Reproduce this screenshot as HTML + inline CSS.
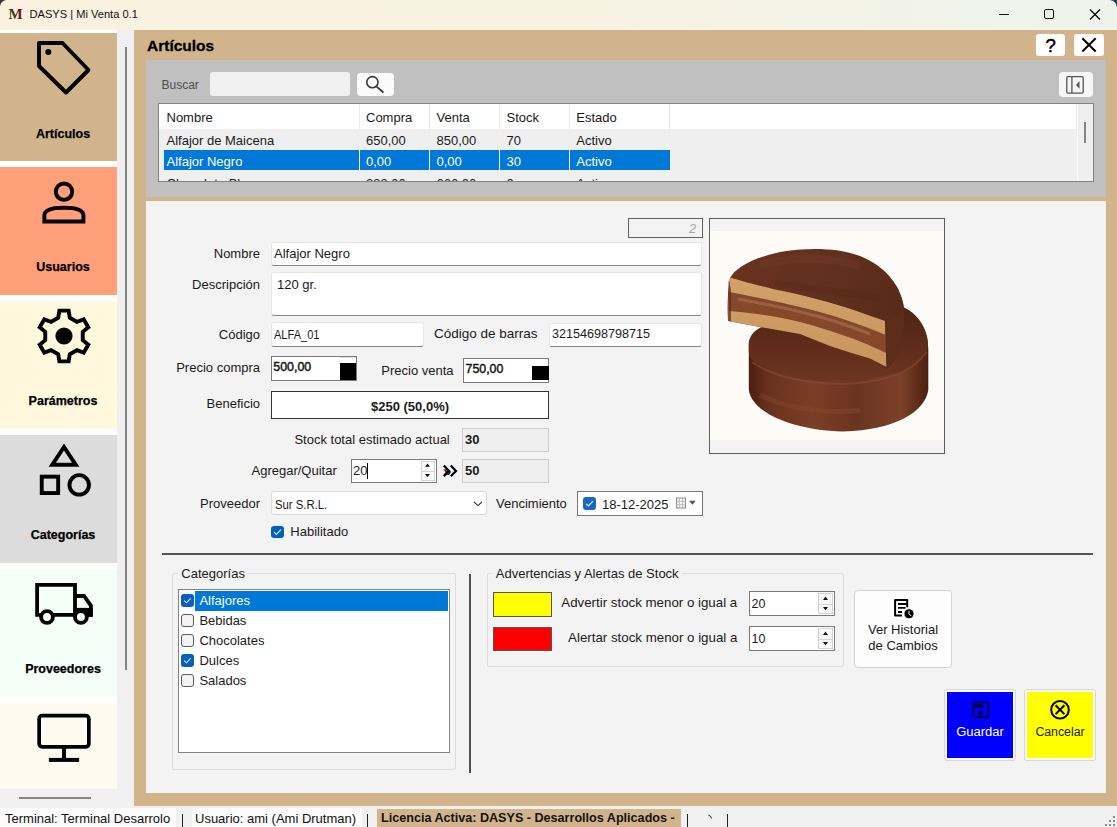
<!DOCTYPE html>
<html><head><meta charset="utf-8">
<style>
*{box-sizing:border-box;margin:0;padding:0}
html,body{width:1117px;height:827px;overflow:hidden;background:#f0f0f0}
body{font-family:"Liberation Sans",sans-serif;font-size:13px;color:#1a1a1a;position:relative}
.a{position:absolute}
.t{position:absolute;font-size:13px;line-height:13px;white-space:nowrap}
.r{text-align:right}
.b{font-weight:bold}
svg{position:absolute;overflow:visible}
.tb{background:#fff;border:1px solid #e6e6e6;border-bottom:1px solid #868686;border-radius:3px}
</style></head><body>
<!-- TITLE BAR -->
<div class="a" style="left:0;top:0;width:1117px;height:30px;background:linear-gradient(90deg,#faf2df 0%,#f8f2e2 50%,#eef4ec 100%)"></div>
<!-- SIDEBAR -->
<div class="a" style="left:0;top:30px;width:117px;height:759px;background:#ffffff"></div>
<div class="a" style="left:117px;top:30px;width:17px;height:776px;background:#f0f0f0"></div>
<div class="a" style="left:0;top:789px;width:134px;height:17px;background:#f0f0f0"></div>
<div class="a" style="left:125px;top:47px;width:2px;height:623px;background:#858585"></div>
<div class="a" style="left:19px;top:797px;width:72px;height:2px;background:#858585"></div>
<div class="a" style="left:0;top:33px;width:117px;height:128px;background:#d2b48c"></div>
<div class="a" style="left:0;top:167px;width:117px;height:128px;background:#ffa07a"></div>
<div class="a" style="left:0;top:301px;width:117px;height:128px;background:#fff8dc"></div>
<div class="a" style="left:0;top:435px;width:117px;height:128px;background:#dcdcdc"></div>
<div class="a" style="left:0;top:569px;width:117px;height:128px;background:#f5fffa"></div>
<div class="a" style="left:0;top:703px;width:117px;height:86px;background:#fffaf0"></div>
<svg width="1117" height="827" style="left:0;top:0" fill="none" stroke="#000" stroke-width="3.9">
<path d="M39,43 H62.5 L88.5,70 L66,92.5 L39,66 Z" stroke-linejoin="round"/>
<circle cx="48.3" cy="52.1" r="3" fill="#000" stroke="none"/>
<circle cx="64" cy="191.7" r="8.2"/>
<path d="M44.35,221.45 V215.5 C44.35,210 52,207.75 64,207.75 C76,207.75 83.45,210 83.45,215.5 V221.45 Z" stroke-linejoin="miter"/>
<path d="M58.20,317.70 L59.40,310.60 L68.60,310.60 L69.80,317.70 L76.95,321.83 L83.70,319.32 L88.30,327.28 L82.75,331.87 L82.75,340.13 L88.30,344.72 L83.70,352.68 L76.95,350.17 L69.80,354.30 L68.60,361.40 L59.40,361.40 L58.20,354.30 L51.05,350.17 L44.30,352.68 L39.70,344.72 L45.25,340.13 L45.25,331.87 L39.70,327.28 L44.30,319.32 L51.05,321.83 Z" stroke-linejoin="miter"/>
<circle cx="64" cy="336" r="8.6" fill="#000" stroke="none"/>
<path d="M64,447 L52.2,464.8 H75.8 Z" stroke-linejoin="miter"/>
<rect x="41.75" y="476.65" width="16.4" height="16.4"/>
<circle cx="79.2" cy="484.9" r="9.75"/>
<path d="M37.1,614.9 V584.9 H75 V614.9 Z" stroke-width="3.8"/>
<path d="M75,596 H84 L90.9,605.6 V614.9 H75" stroke-width="3.8"/>
<rect x="75" y="607.9" width="17.8" height="8.9" fill="#000" stroke="none"/>
<circle cx="47" cy="617" r="5.9" fill="#f5fffa"/>
<circle cx="80.9" cy="617" r="5.9" fill="#f5fffa"/>
<rect x="39.15" y="715.65" width="49.7" height="31.2" rx="3" stroke-width="3.7"/>
<rect x="62" y="747" width="4" height="11" fill="#000" stroke="none"/>
<rect x="48.9" y="757.9" width="30.2" height="4" fill="#000" stroke="none"/>
</svg>
<div class="t b" style="left:13px;width:100px;text-align:center;top:127.6px;font-size:12.5px;line-height:12.5px;color:#000;-webkit-text-stroke:0.25px #000">Artículos</div>
<div class="t b" style="left:13px;width:100px;text-align:center;top:260.8px;font-size:12.5px;line-height:12.5px;color:#000;-webkit-text-stroke:0.25px #000">Usuarios</div>
<div class="t b" style="left:13px;width:100px;text-align:center;top:395.1px;font-size:12.5px;line-height:12.5px;color:#000;-webkit-text-stroke:0.25px #000">Parámetros</div>
<div class="t b" style="left:13px;width:100px;text-align:center;top:528.8px;font-size:12.5px;line-height:12.5px;color:#000;-webkit-text-stroke:0.25px #000">Categorías</div>
<div class="t b" style="left:13px;width:100px;text-align:center;top:662.6px;font-size:12.5px;line-height:12.5px;color:#000;-webkit-text-stroke:0.25px #000">Proveedores</div>
<!-- MAIN TAN -->
<div class="a" style="left:134px;top:30px;width:983px;height:776px;background:#d2b48c"></div>
<!-- SEARCH PANEL -->
<div class="a" style="left:146px;top:60px;width:960px;height:137px;background:#c0c0c0"></div>
<div class="t b" style="left:147px;top:37.9px;font-size:15.5px;line-height:15.5px;color:#000;-webkit-text-stroke:0.3px #000">Artículos</div>
<div class="a" style="left:1036px;top:34px;width:29px;height:22px;background:#fff;border-radius:3px"></div>
<div class="a" style="left:1074px;top:34px;width:30px;height:22px;background:#fff;border-radius:3px"></div>
<div class="t" style="left:161.5px;top:79.4px;color:#4d4d4d;font-size:12px;line-height:12px">Buscar</div>
<div class="a" style="left:210px;top:72px;width:140px;height:24px;background:#f0f0f0;border-radius:3px"></div>
<div class="a" style="left:357px;top:73px;width:37px;height:23px;background:#fbfbfb;border-radius:4px"></div>
<div class="a" style="left:1059px;top:72px;width:34px;height:25px;background:#f6f6f6;border-radius:4px"></div>
<!-- GRID -->
<div class="a" style="left:158px;top:103px;width:936px;height:79px;border:1px solid #838383;background:#efefef;overflow:hidden">
 <div class="a" style="left:0;top:0;width:917px;height:25px;background:#fff"></div>
 <div class="a" style="left:918px;top:0;width:17px;height:77px;background:#efefef;border-left:1px solid #fafafa"></div>
 <div class="a" style="left:925px;top:18px;width:2px;height:21px;background:#858585"></div>
 <div class="a" style="left:5px;top:46px;width:506px;height:20px;background:#0078d7"></div>
 <div class="a" style="left:200px;top:0;width:1px;height:25px;background:#e8e8e8"></div>
 <div class="a" style="left:270px;top:0;width:1px;height:25px;background:#e8e8e8"></div>
 <div class="a" style="left:340px;top:0;width:1px;height:25px;background:#e8e8e8"></div>
 <div class="a" style="left:410px;top:0;width:1px;height:25px;background:#e8e8e8"></div>
 <div class="a" style="left:510px;top:0;width:1px;height:25px;background:#e8e8e8"></div>
 <div class="a" style="left:200px;top:46px;width:1px;height:20px;background:#fff"></div>
 <div class="a" style="left:270px;top:46px;width:1px;height:20px;background:#fff"></div>
 <div class="a" style="left:340px;top:46px;width:1px;height:20px;background:#fff"></div>
 <div class="a" style="left:410px;top:46px;width:1px;height:20px;background:#fff"></div>
 <div class="t" style="left:7.5px;top:6.9px">Nombre</div>
 <div class="t" style="left:207px;top:6.9px">Compra</div>
 <div class="t" style="left:277.5px;top:6.9px">Venta</div>
 <div class="t" style="left:347.5px;top:6.9px">Stock</div>
 <div class="t" style="left:417.3px;top:6.9px">Estado</div>
 <div class="t" style="left:7.5px;top:29.7px">Alfajor de Maicena</div>
 <div class="t" style="left:207px;top:29.7px">650,00</div>
 <div class="t" style="left:277.5px;top:29.7px">850,00</div>
 <div class="t" style="left:347.5px;top:29.7px">70</div>
 <div class="t" style="left:417.3px;top:29.7px">Activo</div>
 <div class="t" style="left:7.5px;top:51px;color:#fff">Alfajor Negro</div>
 <div class="t" style="left:207px;top:51px;color:#fff">0,00</div>
 <div class="t" style="left:277.5px;top:51px;color:#fff">0,00</div>
 <div class="t" style="left:347.5px;top:51px;color:#fff">30</div>
 <div class="t" style="left:417.3px;top:51px;color:#fff">Activo</div>
 <div class="t" style="left:7.5px;top:73px">Chocolate Blanco</div>
 <div class="t" style="left:207px;top:73px">333,00</div>
 <div class="t" style="left:277.5px;top:73px">666,00</div>
 <div class="t" style="left:347.5px;top:73px">0</div>
 <div class="t" style="left:417.3px;top:73px">Activo</div>
</div>
<svg width="1117" height="827" style="left:0;top:0" fill="none">
<circle cx="372.4" cy="82.2" r="5.6" stroke="#3a3a3a" stroke-width="1.6"/>
<path d="M376.6,86.6 L383.4,92.5" stroke="#3a3a3a" stroke-width="1.9"/>
<path d="M1082.3,38.3 L1095.7,51.5 M1095.7,38.3 L1082.3,51.5" stroke="#000" stroke-width="2"/>
<rect x="1066.8" y="76.7" width="16.4" height="16.4" rx="1" stroke="#555" stroke-width="1.3"/>
<path d="M1071.9,76.7 V93.1" stroke="#555" stroke-width="1.3"/>
<path d="M1076,84.9 L1079.5,81 V88.8 Z" fill="#555"/>
</svg>
<div class="t" style="left:1045.5px;top:36.5px;font-size:18.5px;line-height:18.5px;color:#000;-webkit-text-stroke:0.5px #000">?</div>
<!-- DETAIL PANEL -->
<div class="a" style="left:146px;top:201px;width:960px;height:592px;background:#f3f3f3"></div>
<!-- FORM -->
<div class="a" style="left:628px;top:218px;width:75px;height:20px;border:1px solid #5f5f5f;background:#f3f3f3"></div>
<div class="t" style="left:689px;top:221.5px;color:#a8a8a8;font-style:italic">2</div>
<div class="a" style="left:709px;top:218px;width:236px;height:236px;border:1px solid #5f5f5f;background:#f3f3f3"></div>
<svg width="1117" height="827" style="left:0;top:0">
<defs>
<linearGradient id="gside" x1="748" x2="929" y1="0" y2="0" gradientUnits="userSpaceOnUse">
<stop offset="0" stop-color="#4a1f10"/><stop offset="0.12" stop-color="#6a321d"/><stop offset="0.35" stop-color="#7a3e26"/><stop offset="0.6" stop-color="#6b3420"/><stop offset="0.85" stop-color="#7b4028"/><stop offset="1" stop-color="#4a1f10"/>
</linearGradient>
<linearGradient id="gtop2" x1="0" x2="0" y1="305" y2="380" gradientUnits="userSpaceOnUse">
<stop offset="0" stop-color="#4f2313"/><stop offset="1" stop-color="#6d3520"/>
</linearGradient>
<linearGradient id="gtop1" x1="730" x2="904" y1="250" y2="330" gradientUnits="userSpaceOnUse">
<stop offset="0" stop-color="#6a3320"/><stop offset="0.5" stop-color="#62301e"/><stop offset="1" stop-color="#582a1a"/>
</linearGradient>
<linearGradient id="gck" x1="0" x2="0" y1="280" y2="370" gradientUnits="userSpaceOnUse">
<stop offset="0" stop-color="#d2a06a"/><stop offset="1" stop-color="#c9945c"/>
</linearGradient>
</defs>
<rect x="710" y="231" width="234" height="209" fill="#fdfbf7"/>
<path d="M748.8,350 L748.8,390 C752,412 790,430 843,431.6 C895,430 925,412 928.3,390 L928.3,350 C928,330 918,312 899,305.6 L800,318 C770,322 752,326 748.8,342 Z" fill="url(#gside)"/>
<path d="M748.8,344 C750,332 760,325 800,318 L899,305.6 C918,312 928,330 928,345 C925,358 915,366 908.6,369.6 C895,376 871,379 824,381 C800,380 777,373 760,365 C752,361 749,357 748.8,352 Z" fill="url(#gtop2)"/>
<path d="M752,362 C770,375 800,383 840,384 C880,383 910,375 927,352" fill="none" stroke="#8a4a30" stroke-width="2" opacity="0.6"/>
<path d="M760,395 C790,410 830,414 860,410" fill="none" stroke="#8d4d32" stroke-width="5" opacity="0.35"/>
<path d="M729.8,278.5 C735,268 752,258 780,252 C805,248 835,247 860,256 C885,266 900,285 903.5,304.5 C905,320 904,345 896,358 C892,364 889,368 886,369 L870,358.6 L850,352.6 L830,346 L800,334 L760,327 L728,321 C727,305 728,290 729.8,278.5 Z" fill="url(#gtop1)"/>
<path d="M760,264 C790,258 830,256 860,266" fill="none" stroke="#7a4530" stroke-width="8" opacity="0.25"/>
<path d="M775,283 C810,288 850,294 880,298" fill="none" stroke="#4a2012" stroke-width="7" opacity="0.2"/>
<path d="M730.3,277.5 C745,282 760,286 775,289.5 C790,292 805,296 820,300 C840,305 860,312 885,321 L886.5,367 L870,358.6 L850,352.6 L830,346 L800,334 L760,327 L728.5,321 C728,305 729,290 730.3,277.5 Z" fill="url(#gck)"/>
<path d="M729.5,292 C755,297 780,302 800,307 C830,314 860,324 886,335 L886,353 C860,340 830,330 800,322 C780,317 755,313 729,311 Z" fill="#86482a"/>
<path d="M738,299 C760,303 785,308 805,313 C830,319 850,326 870,334" fill="none" stroke="#b88a6c" stroke-width="3" opacity="0.4"/>
<path d="M885,322.3 C895,318 903,312 903.5,304.5 C905,320 904,345 896,358 C892,364 889,368 886.5,369 Z" fill="#5e2c1a"/>
<path d="M728.5,280 L728.5,321 L731,321 L731,290 Z" fill="#5a2816" opacity="0.7"/>
</svg>
<div class="t r" style="right:857px;top:246.8px">Nombre</div>
<div class="a tb" style="left:271px;top:242px;width:431px;height:24px"></div>
<div class="t" style="left:274px;top:246.8px">Alfajor Negro</div>
<div class="t r" style="right:857px;top:277.8px">Descripción</div>
<div class="a tb" style="left:271px;top:272px;width:431px;height:44px"></div>
<div class="t" style="left:277px;top:278px">120 gr.</div>
<div class="t r" style="right:857px;top:327.8px">Código</div>
<div class="a tb" style="left:271px;top:322px;width:153px;height:25px"></div>
<div class="t" style="left:274px;top:327.8px;transform:scaleX(0.85);transform-origin:0 0">ALFA_01</div>
<div class="t" style="left:434px;top:327.3px;font-size:13.5px;line-height:13.5px">Código de barras</div>
<div class="a tb" style="left:549px;top:323px;width:153px;height:24px"></div>
<div class="t" style="left:552px;top:328.3px;font-size:12.6px;line-height:12.6px">32154698798715</div>
<div class="t r" style="right:857px;top:361px">Precio compra</div>
<div class="a" style="left:271px;top:356px;width:86px;height:25px;border:1px solid #7a7a7a;background:#fff"></div>
<div class="a" style="left:340px;top:363px;width:16px;height:17px;background:#000"></div>
<div class="a" style="left:340px;top:357px;width:16px;height:1px;background:#e0e0e0"></div>
<div class="t" style="left:273.3px;top:361.2px;font-size:12.4px;line-height:12.4px;-webkit-text-stroke:0.45px #111">500,00</div>
<div class="t" style="left:381.3px;top:364px">Precio venta</div>
<div class="a" style="left:463px;top:358px;width:86px;height:25px;border:1px solid #7a7a7a;background:#fff"></div>
<div class="a" style="left:532px;top:366px;width:17px;height:14px;background:#000"></div>
<div class="t" style="left:465.5px;top:363.4px;font-size:12.4px;line-height:12.4px;-webkit-text-stroke:0.45px #111">750,00</div>
<div class="t r" style="right:857px;top:397px">Beneficio</div>
<div class="a" style="left:271px;top:391px;width:278px;height:28px;border:1px solid #333;background:#fff"></div>
<div class="t b" style="left:271px;width:278px;text-align:center;top:400px">$250 (50,0%)</div>
<div class="t" style="left:294.4px;top:433.3px">Stock total estimado actual</div>
<div class="a" style="left:462px;top:428px;width:87px;height:24px;border:1px solid #cfcfcf;background:#efefef"></div>
<div class="t b" style="left:465px;top:433.3px">30</div>
<div class="t" style="left:251.5px;top:464px">Agregar/Quitar</div>
<div class="a" style="left:351px;top:459px;width:86px;height:24px;border:1px solid #7a7a7a;background:#fff"></div>
<div class="t" style="left:353px;top:464px">20</div>
<div class="a" style="left:367px;top:463px;width:1px;height:16px;background:#000"></div>
<div class="t b" style="left:443px;top:464px;font-size:15px">»</div>
<div class="a" style="left:462px;top:459px;width:87px;height:24px;border:1px solid #cfcfcf;background:#efefef"></div>
<div class="t b" style="left:465px;top:464px">50</div>
<div class="t r" style="right:857px;top:497px">Proveedor</div>
<div class="a" style="left:271px;top:491px;width:216px;height:24px;border:1px solid #dadada;border-radius:3px;background:#fff"></div>
<div class="t" style="left:275.4px;top:497.5px;transform:scaleX(0.87);transform-origin:0 0">Sur S.R.L.</div>
<div class="t" style="left:496px;top:497px">Vencimiento</div>
<div class="a" style="left:577px;top:491px;width:126px;height:25px;border:1px solid #7a7a7a;background:#fff"></div>
<div class="t" style="left:602px;top:497.6px">18-12-2025</div>
<div class="a" style="left:271px;top:526px;width:13px;height:12px;background:#005fb8;border-radius:3px"></div>
<div class="t" style="left:290.3px;top:525.4px">Habilitado</div>
<div class="a" style="left:162px;top:553px;width:931px;height:2px;background:#555"></div>
<div class="a" style="left:421px;top:461px;width:14px;height:10px;border:1px solid #d4d4d4;border-bottom:none;background:#fafafa"></div>
<div class="a" style="left:421px;top:471px;width:14px;height:10px;border:1px solid #d4d4d4;background:#fafafa"></div>
<div class="a" style="left:583px;top:497px;width:13px;height:13px;background:#1a67c2;border-radius:3px"></div>
<svg width="1117" height="827" style="left:0;top:0" fill="none">
<path d="M425,466.8 L427.5,463.4 L430,466.8 Z M425,474 L427.5,477.2 L430,474 Z" fill="#111"/>
<path d="M443.8,465.6 L449,470.9 L443.8,476.2 M450.8,465.6 L456,470.9 L450.8,476.2" stroke="#000" stroke-width="2.2"/>
<path d="M474.1,502 L477.9,505.6 L481.9,502" stroke="#333" stroke-width="1.1"/>
<path d="M586,503.8 L588.4,506 L593,501.2" stroke="#dfefff" stroke-width="1.1"/>
<path d="M274,532.2 L276.4,534.4 L281,529.6" stroke="#dfefff" stroke-width="1.1"/>
<rect x="676.5" y="498" width="9" height="10" fill="#f2f2f2" stroke="#8a8a8a" stroke-width="1"/>
<path d="M679.5,498 V508 M682.5,498 V508 M676.5,501.3 H685.5 M676.5,504.6 H685.5" stroke="#b5b5b5" stroke-width="0.8"/>
<path d="M689,500.8 H695.8 L692.4,504.8 Z" fill="#555"/>
</svg>
<!-- LOWER -->
<div class="a" style="left:172px;top:573px;width:284px;height:197px;border:1px solid #dcdcdc;border-radius:2px"></div>
<div class="a" style="left:178px;top:568px;width:70px;height:12px;background:#f3f3f3"></div>
<div class="t" style="left:181.3px;top:567px">Categorías</div>
<div class="a" style="left:178px;top:589px;width:272px;height:164px;border:1px solid #838383;background:#fff"></div>
<div class="a" style="left:195px;top:591px;width:253px;height:20px;background:#0078d7"></div>
<div class="a" style="left:181px;top:594px;width:13px;height:13px;background:#0a5fbd;border-radius:3px"></div>
<div class="a" style="left:181px;top:614px;width:13px;height:13px;background:#f3f3f3;border:1px solid #5a5a5a;border-radius:3px"></div>
<div class="a" style="left:181px;top:634px;width:13px;height:13px;background:#f3f3f3;border:1px solid #5a5a5a;border-radius:3px"></div>
<div class="a" style="left:181px;top:654px;width:13px;height:13px;background:#0a5fbd;border-radius:3px"></div>
<div class="a" style="left:181px;top:674px;width:13px;height:13px;background:#f3f3f3;border:1px solid #5a5a5a;border-radius:3px"></div>
<svg width="1117" height="827" style="left:0;top:0" fill="none">
<path d="M184.2,600.6 L186.5,602.8 L190.6,598.4 M184.2,660.6 L186.5,662.8 L190.6,658.4" stroke="#d8ecff" stroke-width="1.1"/>
</svg>
<div class="t" style="left:199.4px;top:594px;color:#fff">Alfajores</div>
<div class="t" style="left:199.4px;top:614px">Bebidas</div>
<div class="t" style="left:199.4px;top:634px">Chocolates</div>
<div class="t" style="left:199.4px;top:654px">Dulces</div>
<div class="t" style="left:199.4px;top:674px">Salados</div>
<div class="a" style="left:469px;top:574px;width:2px;height:199px;background:#505050"></div>
<div class="a" style="left:487px;top:573px;width:357px;height:94px;border:1px solid #dcdcdc;border-radius:2px"></div>
<div class="a" style="left:492px;top:568px;width:190px;height:12px;background:#f3f3f3"></div>
<div class="t" style="left:495.8px;top:566.5px">Advertencias y Alertas de Stock</div>
<div class="a" style="left:493px;top:592px;width:59px;height:25px;background:#ffff00;border:1px solid #555"></div>
<div class="a" style="left:493px;top:627px;width:59px;height:24px;background:#ff0000;border:1px solid #555"></div>
<div class="t" style="left:561.3px;top:596.4px;font-size:13.3px;line-height:13.3px">Advertir stock menor o igual a</div>
<div class="t" style="left:568.1px;top:631.2px;font-size:13.3px;line-height:13.3px">Alertar stock menor o igual a</div>
<div class="a" style="left:749px;top:591px;width:86px;height:25px;border:1px solid #7a7a7a;background:#fff"></div>
<div class="a" style="left:749px;top:626px;width:86px;height:25px;border:1px solid #7a7a7a;background:#fff"></div>
<div class="t" style="left:751.5px;top:598px;font-size:12.5px">20</div>
<div class="t" style="left:751.5px;top:633px;font-size:12.5px">10</div>
<div class="a" style="left:818px;top:593px;width:15px;height:11px;border:1px solid #d4d4d4;border-bottom:none;background:#fafafa"></div>
<div class="a" style="left:818px;top:604px;width:15px;height:10px;border:1px solid #d4d4d4;background:#fafafa"></div>
<div class="a" style="left:818px;top:628px;width:15px;height:11px;border:1px solid #d4d4d4;border-bottom:none;background:#fafafa"></div>
<div class="a" style="left:818px;top:639px;width:15px;height:10px;border:1px solid #d4d4d4;background:#fafafa"></div>
<svg width="1117" height="827" style="left:0;top:0" fill="none">
<path d="M823,600 L825.5,596.6 L828,600 Z M823,607 L825.5,610.4 L828,607 Z M823,635 L825.5,631.6 L828,635 Z M823,642 L825.5,645.4 L828,642 Z" fill="#111"/>
</svg>
<div class="a" style="left:854px;top:590px;width:98px;height:78px;border:1px solid #d3d3d3;border-radius:4px;background:#fdfdfd"></div>
<div class="t" style="left:854px;width:98px;text-align:center;top:622.7px">Ver Historial</div>
<div class="t" style="left:854px;width:98px;text-align:center;top:639.2px">de Cambios</div>
<div class="a" style="left:944px;top:689px;width:72px;height:72px;border:1px solid #d6d6d6;border-radius:3px;background:#fbfbfb"></div>
<div class="a" style="left:947px;top:692px;width:66px;height:66px;background:#0000ff"></div>
<div class="t" style="left:944px;width:72px;text-align:center;top:725px;color:#fff">Guardar</div>
<div class="a" style="left:1024px;top:689px;width:72px;height:72px;border:1px solid #d6d6d6;border-radius:3px;background:#fbfbfb"></div>
<div class="a" style="left:1027px;top:692px;width:66px;height:66px;background:#ffff00"></div>
<div class="t" style="left:1024px;width:72px;text-align:center;top:725.5px;font-size:12.3px">Cancelar</div>
<svg width="1117" height="827" style="left:0;top:0" fill="none">
<path d="M907.2,607.2 V600.1 H895.1 V615.5 H901.9" stroke="#000" stroke-width="2" stroke-linejoin="round"/>
<path d="M898,604 H907.8 M898,607.9 H905.6 M898,612 H902" stroke="#000" stroke-width="1.8"/>
<circle cx="909" cy="613.8" r="5" fill="#000" stroke="#fdfdfd" stroke-width="0.8"/>
<path d="M909,610.8 V613.8 L911.2,616" stroke="#fff" stroke-width="1"/>
<rect x="973.2" y="702.1" width="15.2" height="15.2" rx="2" stroke="#00006a" stroke-width="2.4"/>
<rect x="974.5" y="703.8" width="8.5" height="4.2" fill="#000050"/>
<circle cx="980.5" cy="713" r="2.5" fill="#000050"/>
<circle cx="1060" cy="709.7" r="8.8" stroke="#000" stroke-width="2"/>
<path d="M1055.6,705.3 L1064.4,714.1 M1064.4,705.3 L1055.6,714.1" stroke="#000" stroke-width="2"/>
</svg>
<!-- STATUS BAR -->
<div class="a" style="left:0;top:806px;width:1117px;height:21px;background:#f0f0f0"></div>
<div class="a" style="left:0;top:808px;width:176px;height:19px;background:#fbfbfb"></div>
<div class="a" style="left:192px;top:808px;width:170px;height:19px;background:#fbfbfb"></div>
<div class="a" style="left:377px;top:809px;width:304px;height:18px;background:#d2b48c"></div>
<div class="t" style="left:5px;top:812px;color:#111">Terminal: Terminal Desarrolo</div>
<div class="t" style="left:195px;top:812px;color:#111">Usuario: ami (Ami Drutman)</div>
<div class="t b" style="left:381px;top:812.3px;font-size:12.6px;line-height:12.6px;color:#111">Licencia Activa: DASYS - Desarrollos Aplicados -</div>
<div class="a" style="left:182px;top:814px;width:1px;height:13px;background:#222"></div>
<div class="a" style="left:367px;top:814px;width:1px;height:13px;background:#222"></div>
<div class="a" style="left:687px;top:814px;width:1px;height:13px;background:#222"></div>
<div class="a" style="left:727px;top:814px;width:1px;height:13px;background:#222"></div>
<svg width="1117" height="827" style="left:0;top:0" fill="none">
<path d="M708.5,815.2 Q711,815.6 711.6,818.6" stroke="#222" stroke-width="1"/>
<path d="M1113,816 h2v2h-2z M1109,820 h2v2h-2z M1113,820 h2v2h-2z M1105,824 h2v2h-2z M1109,824 h2v2h-2z M1113,824 h2v2h-2z" fill="#8a8a8a"/>
</svg>
<!-- TITLE -->
<svg width="1117" height="827" style="left:0;top:0" fill="none">
<defs><linearGradient id="mg" x1="0" x2="1" y1="0" y2="0"><stop offset="0" stop-color="#3d2a1a"/><stop offset="0.4" stop-color="#1f4a1f"/><stop offset="0.6" stop-color="#6a1a1a"/><stop offset="1" stop-color="#7a1212"/></linearGradient></defs>
<text x="8.5" y="19" font-family="Liberation Serif" font-weight="bold" font-size="15" fill="url(#mg)">M</text>
<path d="M999,14.5 H1009" stroke="#111" stroke-width="1"/>
<rect x="1044.5" y="9.5" width="9" height="9" rx="1.5" stroke="#111" stroke-width="1"/>
<path d="M1090,9.5 L1100,19.5 M1100,9.5 L1090,19.5" stroke="#000" stroke-width="1.2"/>
<path d="M0,0 H6 Q1,1 0,6 Z" fill="#3a3328"/>
<path d="M1117,0 H1110 Q1116,1 1117,7 Z" fill="#2a3a48"/>
</svg>
<div class="t" style="left:29.5px;top:9.4px;font-size:11.1px;line-height:11.1px;color:#111">DASYS | Mi Venta 0.1</div>
</body></html>
